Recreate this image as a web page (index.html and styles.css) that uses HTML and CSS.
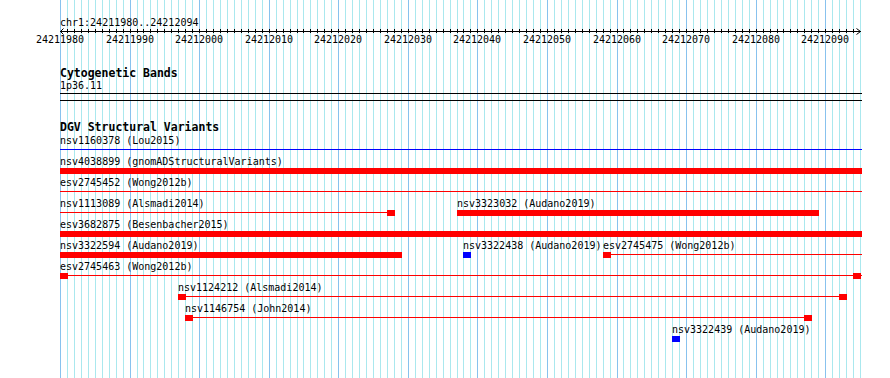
FILE: index.html
```html
<!DOCTYPE html>
<html lang="en">
<head>
<meta charset="utf-8">
<title>chr1:24211980..24212094</title>
<link rel="stylesheet" href="styles.css">
</head>
<body>
<div class="browser">
  <svg class="guides" width="890" height="378" viewBox="0 0 890 378" aria-hidden="true">
    <path class="minor" d="M67.5 0V378M74.5 0V378M81.5 0V378M88.5 0V378M95.5 0V378M102.5 0V378M109.5 0V378M116.5 0V378M123.5 0V378M137.5 0V378M143.5 0V378M150.5 0V378M157.5 0V378M164.5 0V378M171.5 0V378M178.5 0V378M185.5 0V378M192.5 0V378M206.5 0V378M213.5 0V378M220.5 0V378M227.5 0V378M234.5 0V378M241.5 0V378M248.5 0V378M255.5 0V378M262.5 0V378M276.5 0V378M283.5 0V378M290.5 0V378M297.5 0V378M303.5 0V378M310.5 0V378M317.5 0V378M324.5 0V378M331.5 0V378M345.5 0V378M352.5 0V378M359.5 0V378M366.5 0V378M373.5 0V378M380.5 0V378M387.5 0V378M394.5 0V378M401.5 0V378M415.5 0V378M422.5 0V378M429.5 0V378M436.5 0V378M443.5 0V378M450.5 0V378M457.5 0V378M463.5 0V378M470.5 0V378M484.5 0V378M491.5 0V378M498.5 0V378M505.5 0V378M512.5 0V378M519.5 0V378M526.5 0V378M533.5 0V378M540.5 0V378M554.5 0V378M561.5 0V378M568.5 0V378M575.5 0V378M582.5 0V378M589.5 0V378M596.5 0V378M603.5 0V378M610.5 0V378M623.5 0V378M630.5 0V378M637.5 0V378M644.5 0V378M651.5 0V378M658.5 0V378M665.5 0V378M672.5 0V378M679.5 0V378M693.5 0V378M700.5 0V378M707.5 0V378M714.5 0V378M721.5 0V378M728.5 0V378M735.5 0V378M742.5 0V378M749.5 0V378M763.5 0V378M770.5 0V378M777.5 0V378M783.5 0V378M790.5 0V378M797.5 0V378M804.5 0V378M811.5 0V378M818.5 0V378M832.5 0V378M839.5 0V378M846.5 0V378M853.5 0V378M860.5 0V378"/>
    <path class="major" d="M60.5 0V378M130.5 0V378M199.5 0V378M269.5 0V378M338.5 0V378M408.5 0V378M477.5 0V378M547.5 0V378M617.5 0V378M686.5 0V378M756.5 0V378M825.5 0V378"/>
  </svg>

  <div class="panel">
    <div class="ruler-track">
      <div class="position">chr1:24211980..24212094</div>
      <svg class="ruler" width="802" height="7" viewBox="0 0 802 7" aria-hidden="true">
        <path class="axis" d="M0 3.5H801"/>
        <path class="ticks" d="M7.5 1v4M14.5 1v4M21.5 1v4M28.5 1v4M35.5 1v4M42.5 1v4M49.5 1v4M56.5 1v4M63.5 1v4M70.5 1v4M77.5 1v4M83.5 1v4M90.5 1v4M97.5 1v4M104.5 1v4M111.5 1v4M118.5 1v4M125.5 1v4M132.5 1v4M139.5 1v4M146.5 1v4M153.5 1v4M160.5 1v4M167.5 1v4M174.5 1v4M181.5 1v4M188.5 1v4M195.5 1v4M202.5 1v4M209.5 1v4M216.5 1v4M223.5 1v4M230.5 1v4M237.5 1v4M243.5 1v4M250.5 1v4M257.5 1v4M264.5 1v4M271.5 1v4M278.5 1v4M285.5 1v4M292.5 1v4M299.5 1v4M306.5 1v4M313.5 1v4M320.5 1v4M327.5 1v4M334.5 1v4M341.5 1v4M348.5 1v4M355.5 1v4M362.5 1v4M369.5 1v4M376.5 1v4M383.5 1v4M390.5 1v4M397.5 1v4M403.5 1v4M410.5 1v4M417.5 1v4M424.5 1v4M431.5 1v4M438.5 1v4M445.5 1v4M452.5 1v4M459.5 1v4M466.5 1v4M473.5 1v4M480.5 1v4M487.5 1v4M494.5 1v4M501.5 1v4M508.5 1v4M515.5 1v4M522.5 1v4M529.5 1v4M536.5 1v4M543.5 1v4M550.5 1v4M557.5 1v4M563.5 1v4M570.5 1v4M577.5 1v4M584.5 1v4M591.5 1v4M598.5 1v4M605.5 1v4M612.5 1v4M619.5 1v4M626.5 1v4M633.5 1v4M640.5 1v4M647.5 1v4M654.5 1v4M661.5 1v4M668.5 1v4M675.5 1v4M682.5 1v4M689.5 1v4M696.5 1v4M703.5 1v4M710.5 1v4M717.5 1v4M723.5 1v4M730.5 1v4M737.5 1v4M744.5 1v4M751.5 1v4M758.5 1v4M765.5 1v4M772.5 1v4M779.5 1v4M786.5 1v4M793.5 1v4"/>
        <path class="arrow" d="M3.5 0.5L0.5 3.5L3.5 6.5"/>
        <path class="arrow" d="M796.5 0.5L800.5 3.5L796.5 6.5"/>
      </svg>
      <div class="scale">
        <span class="num" style="left:0px">24211980</span>
        <span class="num" style="left:70px">24211990</span>
        <span class="num" style="left:139px">24212000</span>
        <span class="num" style="left:209px">24212010</span>
        <span class="num" style="left:278px">24212020</span>
        <span class="num" style="left:348px">24212030</span>
        <span class="num" style="left:417px">24212040</span>
        <span class="num" style="left:487px">24212050</span>
        <span class="num" style="left:557px">24212060</span>
        <span class="num" style="left:626px">24212070</span>
        <span class="num" style="left:696px">24212080</span>
        <span class="num" style="left:765px">24212090</span>
      </div>
    </div>

    <section class="track cyto">
      <h2 class="track-title">Cytogenetic Bands</h2>
      <div class="band-label">1p36.11</div>
      <div class="band"></div>
    </section>

    <section class="track dgv">
      <h2 class="track-title">DGV Structural Variants</h2>

      <div class="row">
        <span class="label" style="left:0px">nsv1160378 (Lou2015)</span>
        <div class="lane"><i class="line gain" style="left:0px;width:802px"></i></div>
      </div>

      <div class="row">
        <span class="label" style="left:0px">nsv4038899 (gnomADStructuralVariants)</span>
        <div class="lane"><i class="bar loss" style="left:0px;width:802px"></i></div>
      </div>

      <div class="row">
        <span class="label" style="left:0px">esv2745452 (Wong2012b)</span>
        <div class="lane"><i class="line loss" style="left:0px;width:802px"></i></div>
      </div>

      <div class="row">
        <span class="label" style="left:0px">nsv1113089 (Alsmadi2014)</span>
        <span class="label" style="left:397px">nsv3323032 (Audano2019)</span>
        <div class="lane">
          <i class="line loss" style="left:0px;width:327px"></i>
          <i class="bar loss" style="left:327px;width:8px"></i>
          <i class="bar loss" style="left:397px;width:362px"></i>
        </div>
      </div>

      <div class="row">
        <span class="label" style="left:0px">esv3682875 (Besenbacher2015)</span>
        <div class="lane"><i class="bar loss" style="left:0px;width:802px"></i></div>
      </div>

      <div class="row">
        <span class="label" style="left:0px">nsv3322594 (Audano2019)</span>
        <span class="label" style="left:403px">nsv3322438 (Audano2019)</span>
        <span class="label" style="left:543px">esv2745475 (Wong2012b)</span>
        <div class="lane">
          <i class="bar loss" style="left:0px;width:342px"></i>
          <i class="bar gain" style="left:403px;width:8px"></i>
          <i class="line loss" style="left:543px;width:259px"></i>
          <i class="bar loss" style="left:543px;width:8px"></i>
        </div>
      </div>

      <div class="row">
        <span class="label" style="left:0px">esv2745463 (Wong2012b)</span>
        <div class="lane">
          <i class="line loss" style="left:0px;width:802px"></i>
          <i class="bar loss" style="left:0px;width:8px"></i>
          <i class="bar loss" style="left:793px;width:8px"></i>
        </div>
      </div>

      <div class="row">
        <span class="label" style="left:118px">nsv1124212 (Alsmadi2014)</span>
        <div class="lane">
          <i class="line loss" style="left:118px;width:669px"></i>
          <i class="bar loss" style="left:118px;width:8px"></i>
          <i class="bar loss" style="left:779px;width:8px"></i>
        </div>
      </div>

      <div class="row">
        <span class="label" style="left:125px">nsv1146754 (John2014)</span>
        <div class="lane">
          <i class="line loss" style="left:125px;width:627px"></i>
          <i class="bar loss" style="left:125px;width:8px"></i>
          <i class="bar loss" style="left:744px;width:8px"></i>
        </div>
      </div>

      <div class="row">
        <span class="label" style="left:612px">nsv3322439 (Audano2019)</span>
        <div class="lane"><i class="bar gain" style="left:612px;width:8px"></i></div>
      </div>
    </section>
  </div>
</div>
</body>
</html>
```

FILE: styles.css
```css
* {
  box-sizing: border-box;
}

html,
body {
  margin: 0;
  padding: 0;
  background: #ffffff;
}

body {
  font-family: "DejaVu Sans Mono", "Liberation Mono", monospace;
  font-size: 10px;
  color: #000000;
}

.browser {
  position: relative;
  width: 890px;
  height: 378px;
  overflow: hidden;
  background: #ffffff;
}

.guides {
  position: absolute;
  left: 0;
  top: 0;
  display: block;
}

.guides path {
  fill: none;
  stroke-width: 1;
  shape-rendering: crispEdges;
}

.guides .minor {
  stroke: #aae8ee;
}

.guides .major {
  stroke: #88c2ee;
}

.panel {
  position: relative;
  margin-left: 60px;
  width: 802px;
  padding-top: 16px;
}

/* ruler */
.position {
  height: 12px;
  line-height: 13px;
  white-space: pre;
}

.ruler {
  display: block;
}

.ruler path {
  fill: none;
  stroke: #000000;
  stroke-width: 1;
}

.ruler .axis,
.ruler .ticks {
  shape-rendering: crispEdges;
}

.scale {
  position: relative;
  height: 10px;
  line-height: 10px;
}

.num {
  position: absolute;
  top: 0;
  transform: translateX(-50%);
  white-space: pre;
}

/* tracks */
.track {
  display: flex;
  flex-direction: column;
}

.cyto {
  margin-top: 22px;
}

.dgv {
  margin-top: 20px;
}

.track-title {
  margin: 0;
  height: 13px;
  font-size: 11.5px;
  line-height: 13px;
  font-weight: bold;
  white-space: pre;
}

.band-label {
  height: 12px;
  line-height: 12px;
}

.band {
  margin-top: 1px;
  height: 8px;
  border-top: 1px solid #000000;
  border-bottom: 1px solid #000000;
}

.row {
  position: relative;
  height: 21px;
}

.label {
  position: absolute;
  top: 0;
  line-height: 13px;
  white-space: pre;
}

.lane {
  position: absolute;
  left: 0;
  right: 0;
  top: 13px;
  height: 8px;
}

.line,
.bar {
  position: absolute;
  display: block;
}

.line {
  top: 2px;
  height: 1px;
}

.bar {
  top: 0;
  height: 6px;
}

.loss {
  background: #ff0000;
}

.gain {
  background: #0000ff;
}
```
